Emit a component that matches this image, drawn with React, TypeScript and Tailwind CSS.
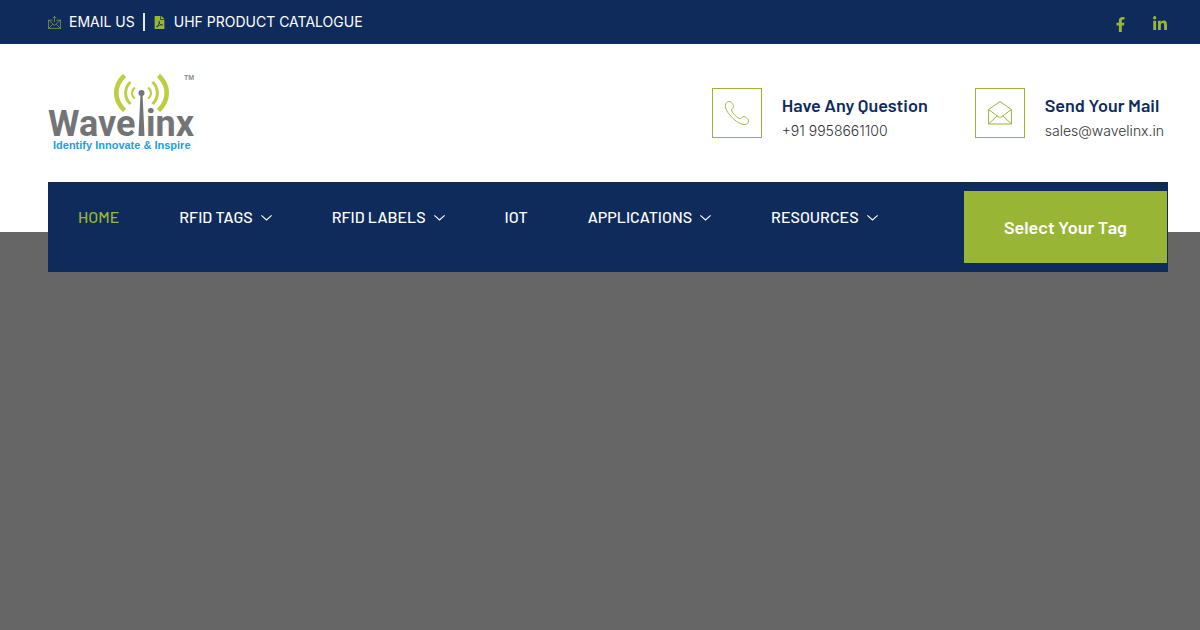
import type { ReactNode } from "react";
import { FaFacebookF, FaFilePdf, FaLinkedinIn } from "react-icons/fa";

type NavItem = { label: string; active?: boolean; hasMenu?: boolean };

const NAV_ITEMS: NavItem[] = [
  { label: "HOME", active: true },
  { label: "RFID TAGS", hasMenu: true },
  { label: "RFID LABELS", hasMenu: true },
  { label: "IOT" },
  { label: "APPLICATIONS", hasMenu: true },
  { label: "RESOURCES", hasMenu: true },
];

function SendMailIcon() {
  return (
    <svg viewBox="0 0 14 14" className="size-[13px]" fill="none" stroke="currentColor" strokeWidth="0.7" aria-hidden="true">
      <path d="M5 4.500H.6v8.900h12.800V4.500H9" />
      <path d="M.6 4.500 7 10l6.400-5.500M.6 13.400l4.700-4.700M13.400 13.400 8.700 8.700" />
      <path d="M7 6.600V.6M5.200 2.300 7 .5l1.800 1.800" />
    </svg>
  );
}

function PhoneIcon() {
  return (
    <svg viewBox="0 0 24 24" className="size-6" fill="none" stroke="currentColor" strokeWidth="0.9" aria-hidden="true">
      <path d="M1.6 1.6C3 .3 5 .1 6.2 1.3c1.5 1.6 2.4 3 2.3 4.300-.1 1.500-1.900 2-2 3.200-.1 1.600 2 4 3.600 5.600 1.700 1.700 3.700 3.400 5.200 3.200 1.200-.2 1.700-2 3.200-2 1.300-.1 2.600.8 4.100 2.200 1.300 1.300 1.200 3.300-.1 4.600-1.500 1.500-3.800 1.600-6.400.5C12.900 21.600 9.500 19 6.700 16.100 4 13.300 1.900 10.500.9 7.800 0 5.300 0 3.200 1.600 1.600Z" />
    </svg>
  );
}

function OpenMailIcon() {
  return (
    <svg viewBox="0 0 24 24" className="size-6" fill="none" stroke="currentColor" strokeWidth="1" strokeLinejoin="round" aria-hidden="true">
      <path d="M.6 8.500v14.500h22.800V8.500L12 .6Z" />
      <path d="m.6 8.500 9.800 7.300c1 .7 2.200.7 3.200 0l9.800-7.300" />
      <path d="m.6 23 8.400-8M23.400 23 15 15" />
    </svg>
  );
}

function ChevronIcon() {
  return (
    <svg viewBox="0 0 12 12" className="size-[11px]" fill="none" stroke="currentColor" strokeWidth="1.2" aria-hidden="true">
      <path d="m.4 3.700 5.600 5 5.600-5" />
    </svg>
  );
}

function Logo() {
  return (
    <svg viewBox="0 0 150 80" className="h-20 w-[150px]" role="img" aria-label="Wavelinx">
      <g className="font-['Roboto',sans-serif] font-bold" fontSize="36" fill="#737477">
        <text x="0" y="63">Wave</text>
        <text x="98" y="63">inx</text>
      </g>
      <g className="font-['Liberation_Sans',sans-serif] font-bold">
        <text x="5" y="76" fontSize="11" fill="#1c9fdc">Identify Innovate &amp; Inspire</text>
        <text x="136" y="7" fontSize="7" fill="#8a8b8d">TM</text>
      </g>
      <path d="M92.500 20h2l2 43h-6Z" fill="#737477" />
      <circle cx="93.500" cy="20" r="3" fill="#737477" />
      <g fill="none" stroke="#bfcd42">
        <path d="M87 14.500c-4 3-4 8 0 11M100 14.500c4 3 4 8 0 11" strokeWidth="2" />
        <path d="M82.500 9c-6.500 6-6.500 16 0 22M104.500 9c6.500 6 6.500 16 0 22" strokeWidth="3" />
        <path d="M76.500 2.500C65.500 13 65.500 27 76.500 37.500M110.500 2.500c11 10.500 11 24.500 0 35" strokeWidth="4.600" />
      </g>
    </svg>
  );
}

function ContactCard({ icon, title, text, href }: { icon: ReactNode; title: string; text: string; href: string }) {
  return (
    <div className="flex items-start gap-5">
      <div className="flex size-[50px] items-center justify-center border border-[#98b535] text-[#98b535]">{icon}</div>
      <div className="pt-[5px]">
        <h3 className="font-['Barlow','Roboto',sans-serif] text-lg leading-6 font-semibold text-[#0f2b5b]">{title}</h3>
        <a href={href} className="mt-0.5 block text-sm leading-6 font-light text-[#333]">{text}</a>
      </div>
    </div>
  );
}

export default function App() {
  return (
    <div className="flex min-h-screen flex-col bg-white font-['Inter',sans-serif]">
      {/* Top bar */}
      <div className="flex h-11 items-center justify-between bg-[#0f2b5b] pr-8 pl-12 text-sm text-white">
        <div className="flex items-center gap-2">
          <a href="#email" className="flex items-center gap-2">
            <span className="text-[#98b535]"><SendMailIcon /></span>
            EMAIL US
          </a>
          <span className="h-[18px] w-0.5 bg-gray-200" />
          <a href="#catalogue" className="flex items-center gap-2">
            <FaFilePdf className="size-[13px] text-[#98b535]" />
            UHF PRODUCT CATALOGUE
          </a>
        </div>
        <div className="flex items-center gap-6 pt-1 text-[#98b535]">
          <a href="#facebook" aria-label="Facebook"><FaFacebookF className="size-[15px]" /></a>
          <a href="#linkedin" aria-label="LinkedIn"><FaLinkedinIn className="size-4" /></a>
        </div>
      </div>

      <header className="relative z-10 pr-8 pl-12">
        <div className="flex items-start justify-between py-[29px]">
          <a href="#home"><Logo /></a>
          <div className="flex gap-[47px] pt-[15px] pr-1">
            <ContactCard icon={<PhoneIcon />} title="Have Any Question" text="+91 9958661100" href="tel:+919958661100" />
            <ContactCard icon={<OpenMailIcon />} title="Send Your Mail" text="sales@wavelinx.in" href="mailto:sales@wavelinx.in" />
          </div>
        </div>

        <div className="-mb-10 flex justify-between bg-[#0f2b5b] pr-px pl-[30px] font-['Barlow','Roboto',sans-serif]">
          <nav className="pt-[23px] pb-[43px]">
            <ul className="flex gap-[60px]">
              {NAV_ITEMS.map((item) => (
                <li key={item.label}>
                  <a
                    href="#menu"
                    className={`flex items-center gap-2 text-base leading-6 font-medium ${item.active ? "text-[#98b535]" : "text-white"}`}
                  >
                    {item.label}
                    {item.hasMenu && <ChevronIcon />}
                  </a>
                </li>
              ))}
            </ul>
          </nav>
          <a href="#select" className="my-[9px] flex items-center bg-[#98b535] px-10 text-lg font-semibold text-white">
            Select Your Tag
          </a>
        </div>
      </header>

      {/* Hero */}
      <main className="flex-1 bg-[#666]" />
    </div>
  );
}
